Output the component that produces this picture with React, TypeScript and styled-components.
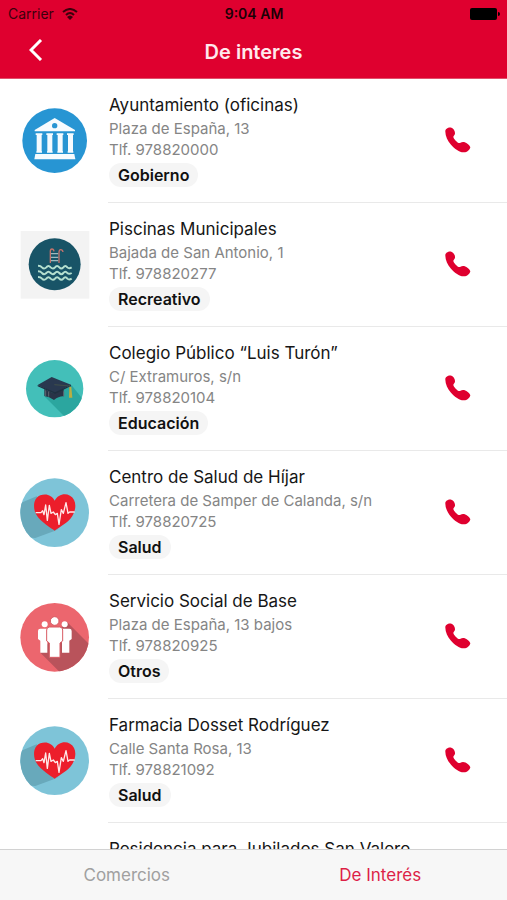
import React from "react";
import styled, { createGlobalStyle } from "styled-components";

const GlobalStyle = createGlobalStyle`
  *, *::before, *::after { box-sizing: border-box; }
  body {
    margin: 0;
    background: #ffffff;
    font-family: Inter, "Liberation Sans", sans-serif;
  }
`;

const brand = "#df002f";

const Screen = styled.div`
  display: flex;
  flex-direction: column;
  height: 100vh;
`;

const Header = styled.header`
  flex: none;
  background: ${brand};
  border-bottom: 1px solid #e0506c;
`;

const StatusBar = styled.div`
  display: grid;
  grid-template-columns: 1fr auto 1fr;
  align-items: center;
  height: 26px;
  padding: 2px 7px 0 8px;
  color: #3c000c;
  font-size: 14px;
  line-height: 20px;
`;

const Carrier = styled.div`
  display: flex;
  align-items: center;
  gap: 8px;
`;

const Clock = styled.time`
  color: #1c0006;
  font-weight: 600;
`;

const Battery = styled.svg`
  justify-self: end;
`;

const NavBar = styled.div`
  display: grid;
  grid-template-columns: 1fr auto 1fr;
  align-items: center;
  height: 52px;
  padding: 0 22px;
`;

const BackButton = styled.button`
  display: flex;
  align-items: center;
  width: 32px;
  height: 40px;
  padding: 0 0 4px 7px;
  border: 0;
  background: none;
  cursor: pointer;
`;

const NavTitle = styled.h1`
  margin: 0;
  color: #ffe9ed;
  font-size: 20px;
  line-height: 24px;
  font-weight: 600;
`;

const List = styled.ul`
  flex: 1;
  min-height: 0;
  margin: 0;
  padding: 0;
  overflow-y: auto;
  scrollbar-width: none;
  list-style: none;
`;

const Row = styled.li`
  display: flex;
  align-items: center;
  padding-left: 20px;
`;

const PlaceIcon = styled.svg`
  flex: none;
  width: 70px;
  height: 70px;
  margin-right: 18px;
`;

const RowBody = styled.div`
  display: flex;
  flex: 1;
  align-items: center;
  justify-content: space-between;
  min-width: 0;
  min-height: 124px;
  padding: 14px 34px 15px 1px;
  border-bottom: 1px solid #e9e9e9;
`;

const Details = styled.div`
  align-self: flex-start;
  min-width: 0;
  white-space: nowrap;
`;

const Name = styled.h2`
  margin: 0 0 1px;
  color: #161616;
  font-size: 17px;
  line-height: 24px;
  font-weight: 400;
`;

const Line = styled.p`
  margin: 0;
  color: #858585;
  font-size: 15px;
  line-height: 21px;
`;

const Tag = styled.span`
  display: block;
  width: fit-content;
  margin-top: 3px;
  padding: 0 9px;
  border-radius: 12px;
  background: #f5f5f5;
  color: #111111;
  font-size: 16px;
  line-height: 24px;
  font-weight: 600;
`;

const CallLink = styled.a`
  display: flex;
  flex: none;
`;

const TabBar = styled.nav`
  display: grid;
  flex: none;
  grid-template-columns: 1fr 1fr;
  height: 51px;
  border-top: 1px solid #d2d2d2;
  background: #f7f7f7;
`;

const Tab = styled.button<{ $active?: boolean }>`
  padding: 0;
  border: 0;
  background: none;
  color: ${(p) => (p.$active ? "#dd1f47" : "#a0a0a0")};
  font-family: inherit;
  font-size: 17px;
  line-height: 24px;
  cursor: pointer;
`;

type Kind = "town" | "pool" | "school" | "health" | "people";

function Icon({ kind }: { kind: Kind }) {
  switch (kind) {
    case "town":
      return (
        <PlaceIcon viewBox="30 33 210 210" aria-hidden="true">
          <circle cx="134" cy="137" r="97" fill="#2795d3" />
          <g fill="#f6fbfe">
            <path d="M74 105 134 69 195 105V109H74Z" />
            <path d="M77 115h20v5h-2v49h1v4H79v-4h1v-49h-3zM109 115h20v5h-2v49h1v4h-17v-4h1v-49h-3zM140 115h20v5h-2v49h1v4h-17v-4h1v-49h-3zM171 115h20v5h-2v49h1v4h-17v-4h1v-49h-3z" />
            <path d="M76 177H193L196 193H73Z" />
          </g>
          <circle cx="134" cy="92" r="8" fill="#2795d3" />
        </PlaceIcon>
      );
    case "pool":
      return (
        <PlaceIcon viewBox="30 30 210 210" aria-hidden="true">
          <rect x="32" y="33" width="206" height="203" fill="#f3f3f3" />
          <circle cx="134" cy="133" r="78" fill="#185467" />
          <g fill="none">
            <path d="M122 101H145M122 112H145M122 122H145" stroke="#9fb9bd" strokeWidth="4" />
            <path
              d="M121 129V94q0-7 5-7 5 0 6 7M147 129V98q0-9 5-9 6 0 7 7"
              stroke="#c4736c"
              strokeWidth="4"
            />
            <path
              d="M84 137q8 0 12 5 6 7 13 0 6-8 13 0 7 7 13 0 6-8 13 0 6 7 12 0 6-8 12 0 5 5 13 0M84 154q8 0 12 5 6 7 13 0 6-8 13 0 7 7 13 0 6-8 13 0 6 7 12 0 6-8 12 0 5 5 13 0M84 171q8 0 12 5 6 7 13 0 6-8 13 0 7 7 13 0 6-8 13 0 6 7 12 0 6-8 12 0 5 5 13 0"
              stroke="#b4dfcf"
              strokeWidth="6"
            />
          </g>
        </PlaceIcon>
      );
    case "school":
      return (
        <PlaceIcon viewBox="30 27 210 210" aria-hidden="true">
          <defs>
            <clipPath id="school-disc">
              <circle cx="134" cy="131" r="86" />
            </clipPath>
          </defs>
          <circle cx="134" cy="131" r="86" fill="#43bfb9" />
          <path
            d="M103 154 172 223 240 190 185 121Z"
            fill="#2ba69f"
            clipPath="url(#school-disc)"
          />
          <path d="M103 132 132 145 161 132V154Q147 153 132 165 117 154 103 153Z" fill="#293347" />
          <path d="M107 136V154M116 139V155M161 139V154" stroke="#62656f" strokeWidth="3" />
          <path d="M83 120 125 96 183 119 135 145Z" fill="#29384f" />
          <path d="M83 120 135 142 183 119V123L135 147 83 124Z" fill="#202f40" />
          <path d="M133 119 180 123V141" fill="none" stroke="#4d5b45" strokeWidth="2" />
          <path d="M178 126H184L187 158H177Z" fill="#b9ae43" />
        </PlaceIcon>
      );
    case "health":
      return (
        <PlaceIcon viewBox="30 24 210 210" aria-hidden="true">
          <defs>
            <clipPath id="health-disc">
              <circle cx="134" cy="128" r="103" />
            </clipPath>
          </defs>
          <circle cx="134" cy="128" r="103" fill="#7ec4d8" />
          <path
            d="M20 104 80 79 145 177 133 183 76 204 20 200Z"
            fill="#68a9bb"
            clipPath="url(#health-disc)"
          />
          <path
            d="M134 182C124 174 92 156 79 134 68 115 69 85 91 76 109 69 126 76 134 92 143 75 163 68 180 77 200 88 200 116 187 138 175 158 147 172 134 182Z"
            fill="#ec1e2b"
          />
          <path
            d="M77 128H93L98 122 102 134 107 105 112 151 118 106 123 130 130 126 136 134 142 130 147 163 154 119 160 130 168 98 174 130 179 126H194"
            fill="none"
            stroke="#ffe9e9"
            strokeWidth="4"
            strokeLinejoin="round"
          />
        </PlaceIcon>
      );
    case "people":
      return (
        <PlaceIcon viewBox="30 21 210 210" aria-hidden="true">
          <defs>
            <clipPath id="people-disc">
              <circle cx="134" cy="127" r="103" />
            </clipPath>
          </defs>
          <circle cx="134" cy="127" r="103" fill="#ec666e" />
          <path
            d="M91 173 160 242 250 220 240 150 169 79Z"
            fill="#b9535b"
            clipPath="url(#people-disc)"
          />
          <g fill="#ffffff">
            <circle cx="104" cy="88" r="9" />
            <circle cx="164" cy="88" r="9" />
            <path d="M91 101H112V173H91V137L84 132V108Q84 101 91 101ZM156 101H178Q185 101 185 108V132L178 137V173H156Z" />
          </g>
          <g fill="#ffffff" stroke="#d85b63" strokeWidth="3">
            <circle cx="134" cy="78" r="13" />
            <path d="M119 96H149Q158 96 158 105V138L150 144V187H118V144L110 138V105Q110 96 119 96Z" />
          </g>
        </PlaceIcon>
      );
  }
}

function PhoneIcon() {
  return (
    <svg width="30" height="30" viewBox="39 45 90 90" aria-hidden="true">
      <path
        d="M46 65C45 57 55 51 64 53 71 55 76 64 75 71 74 76 70 77 70 81 71 87 81 97 86 99 91 100 93 96 99 96 108 96 118 104 121 112 119 121 110 128 100 127 88 126 74 117 63 104 53 93 46 78 46 65Z"
        fill={brand}
      />
    </svg>
  );
}

interface Place {
  name: string;
  address: string;
  phone: string;
  category: string;
  kind: Kind;
}

const places: Place[] = [
  { name: "Ayuntamiento (oficinas)", address: "Plaza de España, 13", phone: "978820000", category: "Gobierno", kind: "town" },
  { name: "Piscinas Municipales", address: "Bajada de San Antonio, 1", phone: "978820277", category: "Recreativo", kind: "pool" },
  { name: "Colegio Público “Luis Turón”", address: "C/ Extramuros, s/n", phone: "978820104", category: "Educación", kind: "school" },
  { name: "Centro de Salud de Híjar", address: "Carretera de Samper de Calanda, s/n", phone: "978820725", category: "Salud", kind: "health" },
  { name: "Servicio Social de Base", address: "Plaza de España, 13 bajos", phone: "978820925", category: "Otros", kind: "people" },
  { name: "Farmacia Dosset Rodríguez", address: "Calle Santa Rosa, 13", phone: "978821092", category: "Salud", kind: "health" },
];

export default function App() {
  return (
    <Screen>
      <GlobalStyle />
      <Header>
        <StatusBar>
          <Carrier>
            Carrier
            <svg width="16" height="12" viewBox="0 0 16 12" fill="none" stroke="currentColor" aria-hidden="true">
              <path d="M1 4Q8-2 15 4" strokeWidth="2" />
              <path d="M4 7Q8 3 12 7" strokeWidth="2" />
              <path d="M5 9Q8 6 11 9L8 12Z" fill="currentColor" stroke="none" />
            </svg>
          </Carrier>
          <Clock>9:04 AM</Clock>
          <Battery width="30" height="12" viewBox="0 0 30 12" aria-hidden="true">
            <rect width="27" height="12" rx="2" />
            <path d="M28 4Q30 4 30 6 30 8 28 8Z" />
          </Battery>
        </StatusBar>
        <NavBar>
          <BackButton aria-label="Volver">
            <svg width="14" height="22" viewBox="0 0 14 22" fill="none" stroke="#ffffff" strokeWidth="3" aria-hidden="true">
              <path d="M12 1 2 11 12 21" />
            </svg>
          </BackButton>
          <NavTitle>De interes</NavTitle>
        </NavBar>
      </Header>
      <List>
        {places.map((place) => (
          <Row key={place.name}>
            <Icon kind={place.kind} />
            <RowBody>
              <Details>
                <Name>{place.name}</Name>
                <Line>{place.address}</Line>
                <Line>Tlf. {place.phone}</Line>
                <Tag>{place.category}</Tag>
              </Details>
              <CallLink href={`tel:${place.phone}`} aria-label={`Llamar a ${place.name}`}>
                <PhoneIcon />
              </CallLink>
            </RowBody>
          </Row>
        ))}
        <Row>
          <PlaceIcon as="span" />
          <RowBody>
            <Details>
              <Name>Residencia para Jubilados San Valero</Name>
            </Details>
          </RowBody>
        </Row>
      </List>
      <TabBar>
        <Tab>Comercios</Tab>
        <Tab $active aria-current="page">De Interés</Tab>
      </TabBar>
    </Screen>
  );
}
